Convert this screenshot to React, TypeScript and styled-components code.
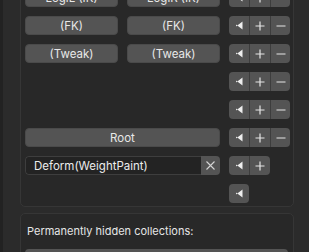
import React from 'react';
import styled, { createGlobalStyle } from 'styled-components';

const GlobalStyle = createGlobalStyle`
  html, body {
    margin: 0;
    padding: 0;
    background: #2b2b2b;
    overflow: hidden;
  }
  body {
    font-family: Inter, "Noto Sans", "DejaVu Sans", sans-serif;
    font-size: 11px;
    color: #e5e5e5;
  }
`;

const Page = styled.div`
  display: flex;
  height: 252px;
  overflow: hidden;
`;

const LeftEdge = styled.div`
  width: 3px;
  background: #222222;
  flex: 0 0 auto;
`;

const Gutter = styled.div`
  width: 17px;
  flex: 0 0 auto;
`;

const Main = styled.div`
  width: 274px;
  flex: 0 0 auto;
  display: flex;
  flex-direction: column;
  gap: 6px;
  margin-top: -17px;
`;

const RightStrip = styled.div`
  flex: 1;
`;

const Panel = styled.div`
  background: #282828;
  border: 1px solid #363636;
  border-radius: 5px;
  padding: 4px 5px 3px 4px;
`;

const Grid = styled.div`
  display: grid;
  grid-template-columns: 93px 93px 59px;
  column-gap: 9px;
  row-gap: 9px;
  grid-auto-rows: 19px;
`;

const Button = styled.div<{ $span?: number }>`
  grid-column: span ${(p) => p.$span ?? 1};
  display: flex;
  align-items: center;
  justify-content: center;
  background: #545454;
  border: 1px solid #4a4a4a;
  border-radius: 4px;
  color: #e8e8e8;
  font-size: 11.5px;
  white-space: nowrap;
  overflow: hidden;
  box-sizing: border-box;
`;

const Blank = styled.div``;

const Field = styled.div`
  grid-column: span 2;
  display: flex;
  border-radius: 4px;
  overflow: hidden;
`;

const FieldInput = styled.div`
  flex: 1;
  display: flex;
  align-items: center;
  padding-left: 8px;
  background: #232323;
  border: 1px solid #3e3e3e;
  border-right: none;
  border-radius: 4px 0 0 4px;
  color: #ececec;
  font-size: 11.5px;
`;

const ClearButton = styled.div`
  width: 19px;
  display: flex;
  align-items: center;
  justify-content: center;
  background: #545454;
`;

const IconGroup = styled.div`
  display: flex;
  justify-self: start;
  border-radius: 4px;
  overflow: hidden;
`;

const IconButton = styled.div<{ $w?: number }>`
  width: ${(p) => p.$w ?? 20}px;
  height: 19px;
  display: flex;
  align-items: center;
  justify-content: center;
  background: #545454;
  & + & {
    border-left: 1px solid #3d3d3d;
  }
`;

const Label = styled.div`
  line-height: 16px;
  padding: 5px 0 10px 2px;
  color: #e6e6e6;
`;

const WideButton = styled.div`
  height: 19px;
  background: #545454;
  border-radius: 4px;
`;

const ArrowIcon = () => (
  <svg width="7" height="9" viewBox="0 0 7 9">
    <polygon points="0,3.6 0,5.4 6.5,0.5 6.5,8.5" fill="#eeeeee" />
  </svg>
);

const PlusIcon = () => (
  <svg width="10" height="10" viewBox="0 0 10 10">
    <path d="M5 0.5V9.5M0.5 5H9.5" stroke="#e6e6e6" strokeWidth="1.2" />
  </svg>
);

const MinusIcon = () => (
  <svg width="10" height="10" viewBox="0 0 10 10">
    <path d="M0.5 5H9.5" stroke="#e6e6e6" strokeWidth="1.2" />
  </svg>
);

const CloseIcon = () => (
  <svg width="9" height="9" viewBox="0 0 9 9">
    <path d="M0.5 0.5L8.5 8.5M8.5 0.5L0.5 8.5" stroke="#d4d4d4" strokeWidth="1.1" />
  </svg>
);

const Icons: React.FC<{ count: number }> = ({ count }) => (
  <IconGroup>
    <IconButton>
      <ArrowIcon />
    </IconButton>
    {count > 1 && (
      <IconButton>
        <PlusIcon />
      </IconButton>
    )}
    {count > 2 && (
      <IconButton $w={19}>
        <MinusIcon />
      </IconButton>
    )}
  </IconGroup>
);

const rows: [string | null, string | null][] = [
  ['LogiL (IK)', 'LogiR (IK)'],
  ['(FK)', '(FK)'],
  ['(Tweak)', '(Tweak)'],
  [null, null],
  [null, null],
];

export default function App() {
  return (
    <>
      <GlobalStyle />
      <Page>
        <LeftEdge />
        <Gutter />
        <Main>
          <Panel>
            <Grid>
              {rows.map(([a, b], i) => (
                <React.Fragment key={i}>
                  {a ? <Button>{a}</Button> : <Blank />}
                  {b ? <Button>{b}</Button> : <Blank />}
                  <Icons count={3} />
                </React.Fragment>
              ))}
              <Button $span={2}>Root</Button>
              <Icons count={3} />
              <Field>
                <FieldInput>Deform(WeightPaint)</FieldInput>
                <ClearButton>
                  <CloseIcon />
                </ClearButton>
              </Field>
              <Icons count={2} />
              <Blank />
              <Blank />
              <Icons count={1} />
            </Grid>
          </Panel>
          <Panel>
            <Label>Permanently hidden collections:</Label>
            <WideButton />
          </Panel>
        </Main>
        <RightStrip />
      </Page>
    </>
  );
}
